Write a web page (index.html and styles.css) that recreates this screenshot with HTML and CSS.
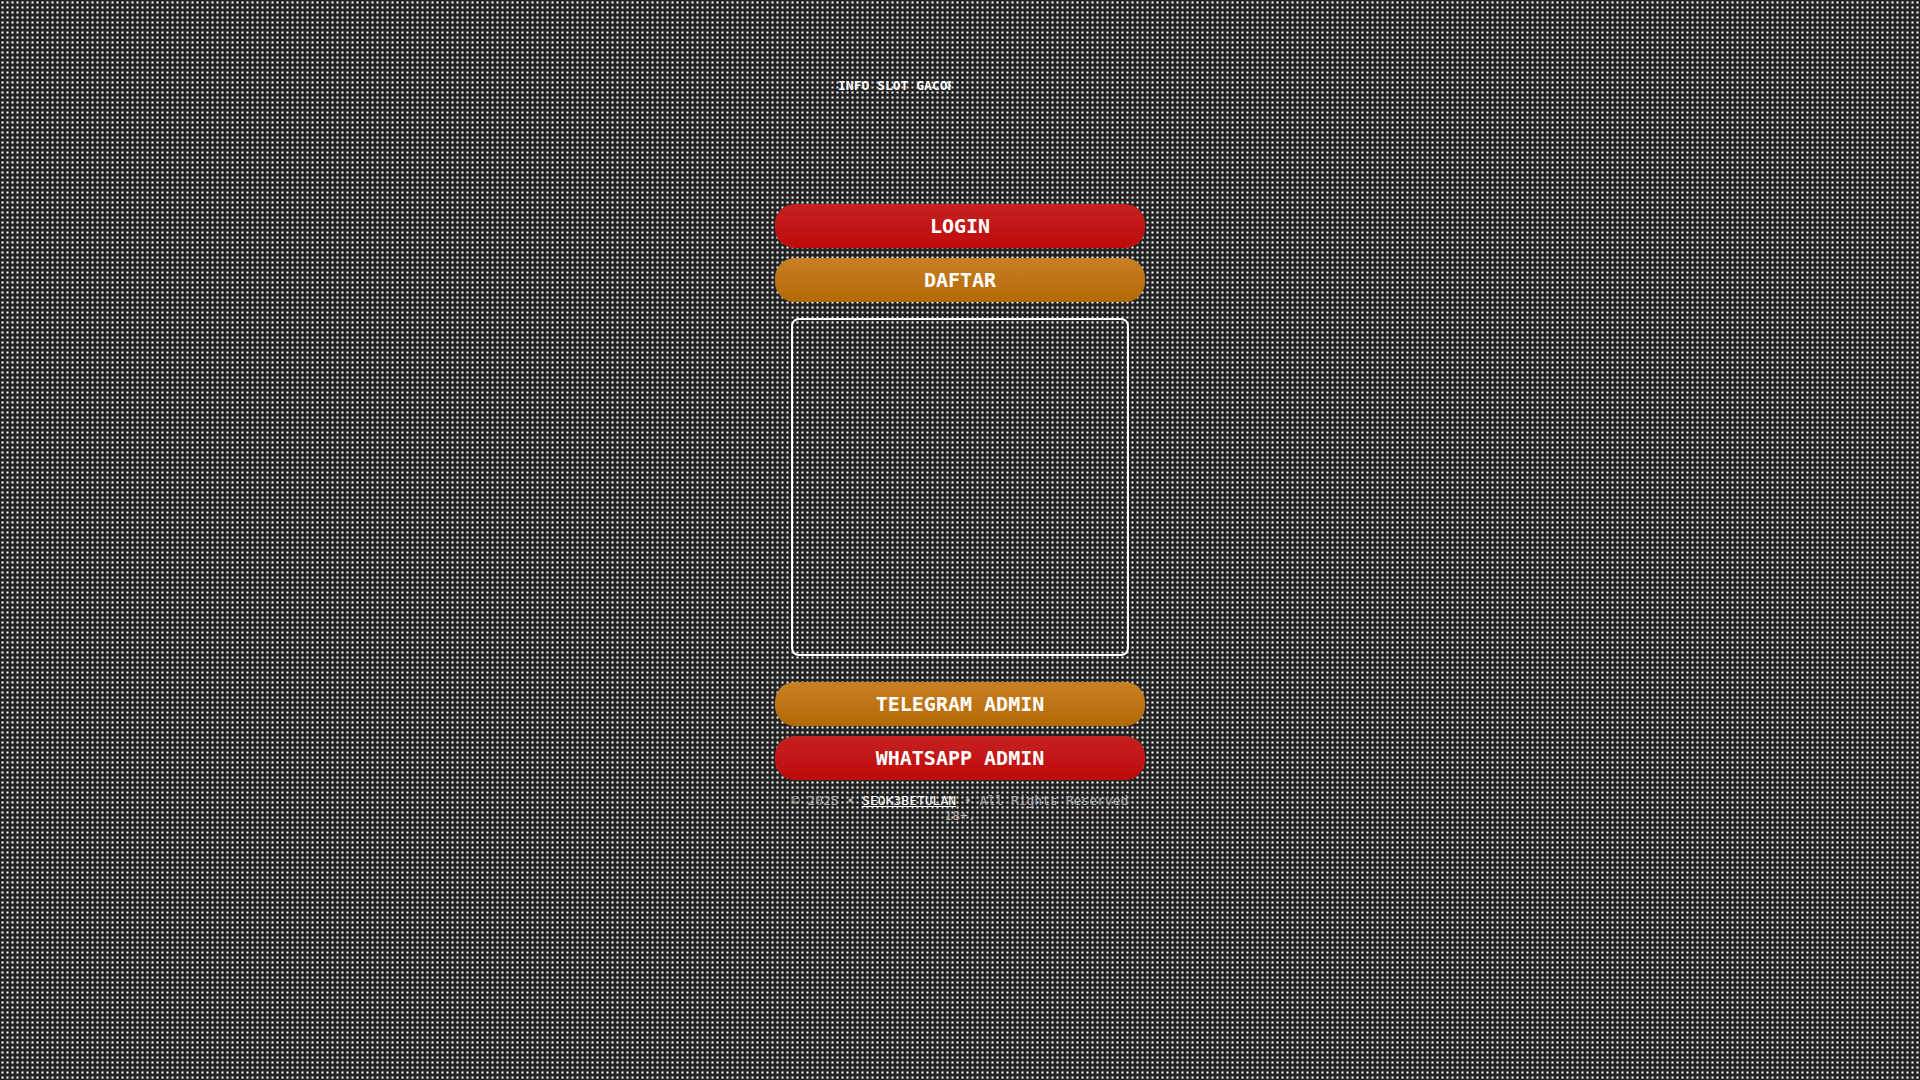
FILE: index.html
```html
<!DOCTYPE html>
<html lang="id">
<head>
  <meta charset="UTF-8">
  <meta name="viewport" content="width=device-width, initial-scale=1.0">
  <title>SEOK3BETULAN</title>
  <link rel="stylesheet" href="styles.css">
</head>
<body>
  <main class="container">
    <!-- Running text -->
    <div class="ticker">INFO SLOT GACOR</div>

    <nav class="links">
      <a class="btn btn-red" href="#login">LOGIN</a>
      <a class="btn btn-gold" href="#daftar">DAFTAR</a>
    </nav>

    <div class="banner"></div>

    <nav class="links">
      <a class="btn btn-gold" href="#telegram">TELEGRAM ADMIN</a>
      <a class="btn btn-red" href="#whatsapp">WHATSAPP ADMIN</a>
    </nav>

    <footer class="footer">
      © 2025 • <a href="#home">SEOK3BETULAN</a> • All Rights Reserved 18+.
    </footer>
  </main>
</body>
</html>
```

FILE: styles.css
```css
* {
  box-sizing: border-box;
}

/* Dotted background */
body {
  margin: 0;
  min-height: 100vh;
  background-color: #222;
  background-image: radial-gradient(circle, #fff, #888 30%, #222 55%);
  background-size: 5px 5px;
  color: #fff;
  font-family: "DejaVu Sans Mono", monospace;
}

.container {
  width: 100%;
  max-width: 370px;
  margin: 0 auto;
  padding-top: 78px;
}

/* Running text */
.ticker {
  width: 176px;
  margin-bottom: 110px;
  padding-left: 63px;
  overflow: hidden;
  white-space: nowrap;
  font-size: 13px;
  font-weight: bold;
  line-height: 16px;
}

/* Buttons */
.links {
  display: flex;
  flex-direction: column;
  gap: 10px;
}

.btn {
  padding: 10px;
  border-radius: 20px;
  color: #fff;
  font-size: 20px;
  font-weight: bold;
  line-height: 24px;
  text-align: center;
  text-decoration: none;
}

.btn-red {
  background: linear-gradient(#c62121, #be0a0a);
}

.btn-gold {
  background: linear-gradient(#c88024, #b36805);
}

/* Banner frame */
.banner {
  margin: 16px 16px 26px;
  aspect-ratio: 1;
  border: 2px solid #fff;
  border-radius: 8px;
}

/* Footer */
.footer {
  padding: 13px 10px;
  color: #aaa;
  font-size: 13px;
  line-height: 15px;
  text-align: center;
}

.footer a {
  color: #fff;
}
```
